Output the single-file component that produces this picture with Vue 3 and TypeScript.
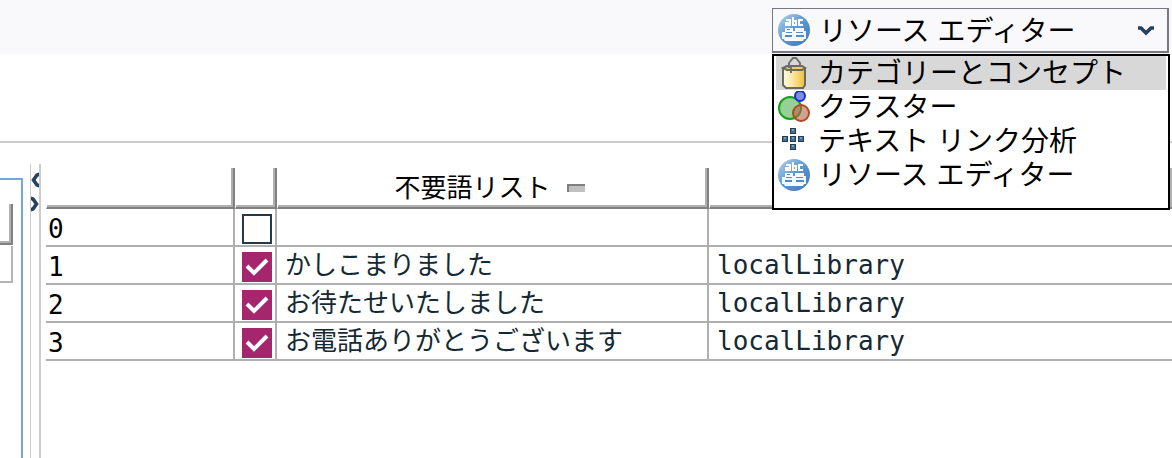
<script setup lang="ts">
import { ref } from 'vue'

type IconName = 'bucket' | 'clusters' | 'links' | 'abc'

interface View {
  id: string
  label: string
  icon: IconName
}

interface Row {
  id: number
  checked: boolean
  word: string
  library: string
}

const views: View[] = [
  { id: 'categories', label: 'カテゴリーとコンセプト', icon: 'bucket' },
  { id: 'clusters', label: 'クラスター', icon: 'clusters' },
  { id: 'links', label: 'テキスト リンク分析', icon: 'links' },
  { id: 'resources', label: 'リソース エディター', icon: 'abc' },
]

const current = ref('resources')
const hovered = ref('categories')

const rows = ref<Row[]>([
  { id: 0, checked: false, word: '', library: '' },
  { id: 1, checked: true, word: 'かしこまりました', library: 'localLibrary' },
  { id: 2, checked: true, word: 'お待たせいたしました', library: 'localLibrary' },
  { id: 3, checked: true, word: 'お電話ありがとうございます', library: 'localLibrary' },
])
</script>

<template>
  <div class="app">
    <svg class="defs" aria-hidden="true">
      <defs>
        <linearGradient id="globe" x1="0" y1="0" x2="1" y2="1">
          <stop offset="0" stop-color="#b5d3ee" />
          <stop offset="0.5" stop-color="#5b97d0" />
          <stop offset="1" stop-color="#3b79b8" />
        </linearGradient>
        <linearGradient id="gold" x1="0" y1="0" x2="1" y2="0">
          <stop offset="0" stop-color="#fffbe6" />
          <stop offset="0.4" stop-color="#fbe8a8" />
          <stop offset="1" stop-color="#efbf3a" />
        </linearGradient>
        <symbol id="icon-abc" viewBox="0 0 32 32">
          <circle cx="16" cy="16" r="16" fill="url(#globe)" />
          <path
            d="M8 6h4v5H8V9h4M15 3v8h3V7h-3M25 6h-4v5h4"
            fill="none" stroke="#fff" stroke-width="2"
          />
          <path d="M7 14h8v3h2v-3h9v3h2v8H4v-7h3z" fill="#fff" fill-opacity="0.95" />
          <path d="M8 18h6v1H8zM18 18h7v1h-7zM7 21h7v2H7zM18 21h8v2h-8zM9 15h3v1H9z" fill="#4d8cc9" />
          <path d="M6 25h20l-1 2H7z" fill="#fff" />
        </symbol>
        <symbol id="icon-bucket" viewBox="0 0 32 32">
          <path d="M5 11v17l3 3h17l2-3V11z" fill="url(#gold)" stroke="#6a6a60" stroke-width="2" />
          <path d="M5 11l4-2h15l3 2-3 2H9z" fill="#efc96a" stroke="#6a6a60" stroke-width="2" />
          <path d="M11 11V6l4-5h3l4 5v4M13 9v7" fill="none" stroke="#70706a" stroke-width="2" />
        </symbol>
        <symbol id="icon-clusters" viewBox="0 0 32 32">
          <circle cx="12" cy="17" r="11" fill="#96d096" stroke="#16a016" stroke-width="2" />
          <circle cx="23" cy="22" r="8" fill="#b8644c" fill-opacity="0.6" stroke="#b04a22" stroke-width="2" />
          <circle cx="22" cy="5" r="5" fill="#7f8cec" stroke="#1a2ae0" stroke-width="2" />
        </symbol>
        <symbol id="icon-links" viewBox="0 0 32 32">
          <path
            d="M12 3h6v6h-6zM4 11h6v6H4zM12 11h6v6h-6zM20 11h6v6h-6zM12 19h6v6h-6z"
            fill="#2c3c4a"
          />
          <path
            d="M13 4h4v4h-4zM5 12h4v4H5zM13 12h4v4h-4zM21 12h4v4h-4zM13 20h4v4h-4z"
            fill="#3d6c9c"
          />
          <path
            d="M14 4h2v2h-2zM6 12h2v2H6zM14 12h2v2h-2zM22 12h2v2h-2zM14 20h2v2h-2z"
            fill="#6b9cca"
          />
        </symbol>
      </defs>
    </svg>

    <header class="toolbar">
      <div class="combo">
        <select v-model="current" class="combo-box" aria-label="表示">
          <option v-for="view in views" :key="view.id" :value="view.id">{{ view.label }}</option>
        </select>
        <svg class="icon combo-icon" aria-hidden="true">
          <use :href="'#icon-' + views.find((v) => v.id === current)?.icon" />
        </svg>
        <svg class="combo-arrow" viewBox="0 0 16 10" aria-hidden="true">
          <path d="M0 2h3l5 5l5-5h3" fill="none" stroke="#24425e" stroke-width="3.6" />
        </svg>
        <ul class="popup" role="listbox" aria-label="表示">
          <li
            v-for="view in views"
            :key="view.id"
            role="option"
            class="option"
            :class="{ active: view.id === hovered }"
            :aria-selected="view.id === current"
            @mouseenter="hovered = view.id"
            @click="current = view.id"
          >
            <svg class="icon" aria-hidden="true"><use :href="'#icon-' + view.icon" /></svg>
            <span class="option-label">{{ view.label }}</span>
          </li>
        </ul>
      </div>
    </header>

    <div class="band"></div>

    <main class="panes">
      <section class="side">
        <div class="side-head"></div>
        <div class="side-cell"></div>
      </section>

      <div class="splitter">
        <button type="button" class="split-button" aria-label="左へ折りたたむ">
          <svg viewBox="0 0 8 16" aria-hidden="true">
            <path d="M9 2L6 3L2.5 8L6 13L9 14" fill="none" stroke="#24425e" stroke-width="3.6" />
          </svg>
        </button>
        <button type="button" class="split-button" aria-label="右へ展開する">
          <svg viewBox="0 0 8 16" aria-hidden="true">
            <path d="M-1 2L2 3L5.5 8L2 13L-1 14" fill="none" stroke="#24425e" stroke-width="3.6" />
          </svg>
        </button>
      </div>

      <section class="content">
        <table class="grid">
          <colgroup>
            <col class="col-number" />
            <col class="col-check" />
            <col class="col-word" />
            <col />
          </colgroup>
          <thead>
            <tr>
              <th></th>
              <th></th>
              <th>
                <span class="heading">不要語リスト<i class="sort"></i></span>
              </th>
              <th></th>
            </tr>
          </thead>
          <tbody>
            <tr v-for="row in rows" :key="row.id">
              <td class="number">{{ row.id }}</td>
              <td class="check">
                <input v-model="row.checked" type="checkbox" :aria-label="row.word || '新規'" />
                <svg v-if="row.checked" class="tick" viewBox="0 0 30 30" aria-hidden="true">
                  <path d="M5 14l7 7L25 8" fill="none" stroke="#fff" stroke-width="4" />
                </svg>
              </td>
              <td class="word">{{ row.word }}</td>
              <td class="library">{{ row.library }}</td>
            </tr>
          </tbody>
        </table>
      </section>
    </main>
  </div>
</template>

<style>
body {
  margin: 0;
  background: #fff;
}
</style>

<style scoped>
.app {
  display: flex;
  flex-direction: column;
  min-height: 100vh;
  overflow: hidden;
  font-family: 'Liberation Sans', 'Noto Sans CJK JP', sans-serif;
  color: #000;
}

.defs {
  position: absolute;
  width: 0;
  height: 0;
}

.toolbar {
  display: flex;
  justify-content: flex-end;
  box-sizing: border-box;
  height: 54px;
  padding: 8px 3px 0 0;
  background: #f9f9fc;
}

.combo {
  position: relative;
  width: 397px;
  height: 45px;
}

.combo-box {
  appearance: none;
  display: block;
  box-sizing: border-box;
  width: 100%;
  height: 100%;
  margin: 0;
  padding: 2px 40px 0 46px;
  border: 1px solid #77777f;
  border-right-width: 2px;
  border-bottom-width: 2px;
  border-radius: 0;
  background: #f9f9fc;
  color: #000;
  font-family: inherit;
  font-size: 28px;
}

.icon {
  display: block;
  flex: none;
  width: 32px;
  height: 32px;
  overflow: visible;
}

.combo-icon {
  position: absolute;
  top: 6px;
  left: 6px;
  pointer-events: none;
}

.combo-arrow {
  position: absolute;
  top: 18px;
  right: 15px;
  width: 16px;
  height: 10px;
  pointer-events: none;
}

.popup {
  position: absolute;
  z-index: 2;
  top: 46px;
  left: 0;
  right: -1px;
  box-sizing: border-box;
  margin: 0;
  padding: 0 2px 16px;
  border: 2px solid #000;
  background: #fff;
  list-style: none;
}

.option {
  display: flex;
  align-items: center;
  gap: 8px;
  height: 34px;
  padding-left: 2px;
  font-size: 28px;
  line-height: 32px;
  white-space: nowrap;
}

.option-label {
  padding-top: 2px;
}

.option.active {
  background: #d8d8d8;
}

.band {
  height: 87px;
  border-bottom: 2px solid #ccc;
}

.panes {
  display: flex;
  flex: 1;
}

.side {
  flex: none;
  box-sizing: border-box;
  width: 23px;
  margin-top: 35px;
  padding: 24px 10px 0 0;
  border-top: 2px solid #74a7db;
  border-right: 2px solid #74a7db;
}

.side {
  padding-right: 8px;
}

.side-head {
  box-sizing: border-box;
  height: 41px;
  border-right: 2px solid #808080;
  border-bottom: 2px solid #808080;
  box-shadow: inset -2px -2px #b0b0b0;
}

.side-cell {
  box-sizing: border-box;
  height: 37px;
  margin-top: 1px;
  border-right: 2px solid #b4b4b4;
  border-bottom: 2px solid #b4b4b4;
}

.splitter {
  display: flex;
  flex: none;
  flex-direction: column;
  gap: 8px;
  box-sizing: border-box;
  width: 11px;
  margin: 21px 0 0 7px;
  padding-top: 8px;
  border-left: 1px solid #ccc;
  border-right: 2px solid #ccc;
}

.split-button {
  display: block;
  height: 16px;
  padding: 0;
  border: 0;
  background: none;
}

.split-button svg {
  display: block;
  width: 8px;
  height: 16px;
}

.content {
  flex: 1;
  min-width: 0;
  padding: 25px 0 0 5px;
}

.grid {
  width: 100%;
  table-layout: fixed;
  border-collapse: separate;
  border-spacing: 0;
}

.col-number {
  width: 189px;
}

.col-check {
  width: 42px;
}

.col-word {
  width: 432px;
}

.grid th {
  box-sizing: border-box;
  height: 41px;
  padding: 0;
  border-left: 1px solid #fff;
  border-right: 2px solid #808080;
  border-bottom: 2px solid #808080;
  box-shadow: inset -2px -2px #b0b0b0;
  font-size: 26px;
  font-weight: 400;
  line-height: 36px;
}

.heading {
  display: flex;
  align-items: center;
  justify-content: center;
  gap: 16px;
  padding-right: 6px;
}

.sort {
  box-sizing: border-box;
  width: 18px;
  height: 8px;
  border-top: 2px solid #808080;
  border-left: 2px solid #808080;
  background: #c0c0c0;
}

.grid td {
  box-sizing: border-box;
  height: 38px;
  padding: 0 0 0 8px;
  border-right: 2px solid #b0b0b0;
  border-bottom: 2px solid #b0b0b0;
  color: #152935;
  font-size: 26px;
  line-height: 36px;
  white-space: nowrap;
}

.grid th:last-child,
.grid td:last-child {
  border-right: 0;
}

.grid .number {
  padding: 4px 0 0 2px;
  color: #000;
  font-family: 'DejaVu Sans Mono', monospace;
  line-height: 32px;
}

.grid .library {
  font-family: 'DejaVu Sans Mono', monospace;
}

.grid .check {
  position: relative;
  padding: 5px 0 1px 7px;
  line-height: 0;
}

.check input {
  appearance: none;
  display: block;
  box-sizing: border-box;
  width: 30px;
  height: 30px;
  margin: 0;
  border: 2px solid #24394b;
  border-radius: 0;
  background: #fff;
}

.check input:checked {
  border-color: #a6266e;
  background: #a6266e;
}

.tick {
  position: absolute;
  top: 5px;
  left: 7px;
  width: 30px;
  height: 30px;
  pointer-events: none;
}
</style>
